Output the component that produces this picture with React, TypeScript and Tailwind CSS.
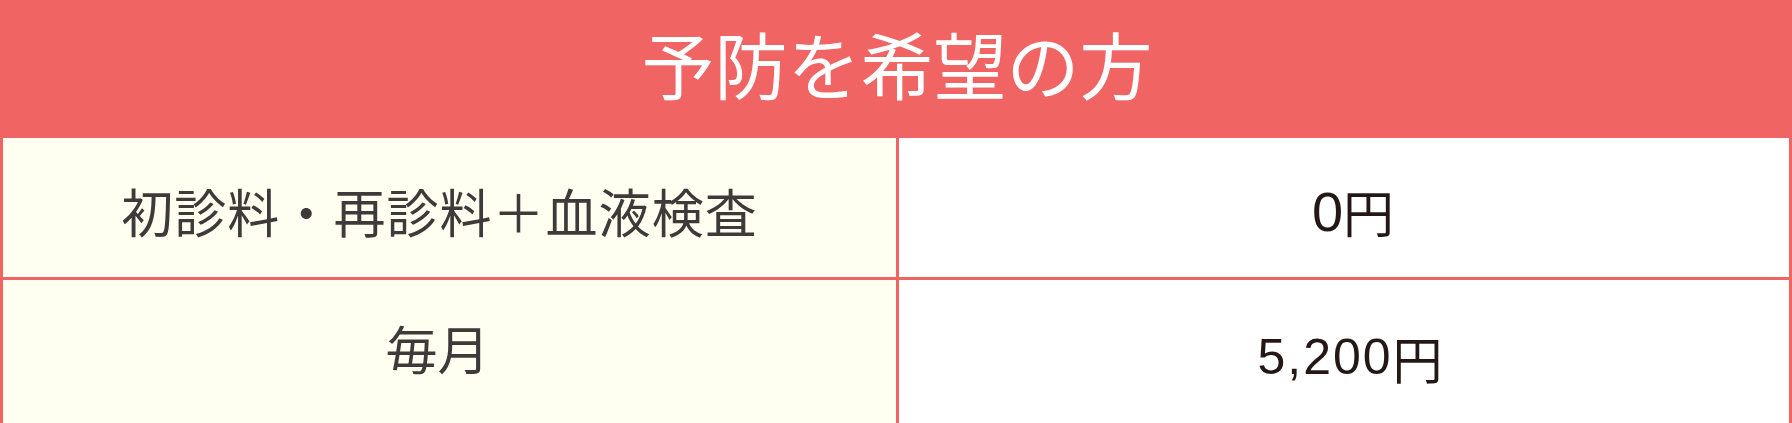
import React from "react";

const jp = "font-['Noto_Sans_CJK_JP',_'Noto_Sans',_sans-serif]";

export default function App() {
  return (
    <div className="h-[423px] w-full overflow-hidden bg-white">
      <div className="flex flex-col border-x-[3px] border-[#f06464]">
        <div className={`flex h-[138px] items-center justify-center bg-[#f06464] pb-[14px] pl-[2px] text-[73px] font-normal leading-none text-white ${jp}`}>
          <span>予防を希望の方</span>
        </div>
        <div className="flex h-[142px] border-b-[3px] border-[#f06464]">
          <div className={`flex w-[896px] shrink-0 items-center justify-center border-r-[3px] border-[#f06464] bg-[#fefff0] pr-[20px] pt-[6px] text-[52px] leading-none tracking-[0.02em] text-[#3e3a39] ${jp}`}>
            初診料・再診料＋血液検査
          </div>
          <div className="flex flex-1 items-center justify-center pl-[18px] pt-[8px] leading-none text-[#231815]">
            <span className="font-['Liberation_Sans',_Arial,_sans-serif] text-[56px]">0</span>
            <span className={`${jp} text-[51px]`}>円</span>
          </div>
        </div>
        <div className="flex h-[170px]">
          <div className={`flex w-[896px] shrink-0 items-start justify-center border-r-[3px] border-[#f06464] bg-[#fefff0] pr-[24px] pt-[42px] text-[52px] leading-none text-[#3e3a39] ${jp}`}>
            毎月
          </div>
          <div className="flex flex-1 items-start justify-center pl-[12px] pt-[52px] leading-none text-[#231815]">
            <span className="font-['Liberation_Sans',_Arial,_sans-serif] text-[50px] tracking-[2px]">5,200</span>
            <span className={`${jp} text-[50px]`}>円</span>
          </div>
        </div>
      </div>
    </div>
  );
}
